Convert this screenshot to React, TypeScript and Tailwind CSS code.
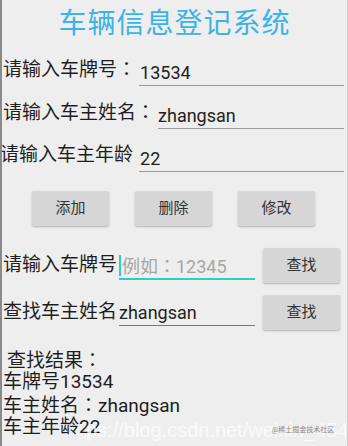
const FONT = { fontFamily: 'Roboto, "Noto Sans CJK SC", sans-serif' };

// Android-style centred full-width colon
function Colon() {
  return <span style={{ fontFamily: '"Noto Sans CJK TC", sans-serif' }}>：</span>;
}

function Field({ value, className = '' }: { value: string; className?: string }) {
  return (
    <div className={`h-[24px] border-b border-[#9a9a9a] text-[18px] leading-[22px] text-[#222] ${className}`}>
      {value}
    </div>
  );
}

function GrayButton({ label, className = '' }: { label: string; className?: string }) {
  return (
    <button className={`h-[35px] rounded-[2px] bg-[#d6d6d6] text-[15px] text-[#333] shadow-[0_1px_2px_rgba(0,0,0,0.25)] ${className}`}>
      {label}
    </button>
  );
}

export default function App() {
  return (
    <div
      className="relative w-[348px] h-[446px] overflow-hidden bg-[#eeeeee] border-l-2 border-r border-l-[#8a8a8a] border-r-[#d0d0d0] text-[#1e1e1e]"
      style={FONT}
    >
      <div className="h-[48px] flex items-center justify-center text-[28px] text-[#3db2e4] tracking-[1px]">
        车辆信息登记系统
      </div>

      <div className="h-[43px] flex items-center pr-[3px]">
        <span className="text-[19px] pl-[1px] whitespace-nowrap">请输入车牌号<Colon /></span>
        <Field value="13534" className="flex-1 ml-[3px] mt-[8px] pl-[1px]" />
      </div>

      <div className="h-[43px] flex items-center pr-[3px]">
        <span className="text-[19px] pl-[1px] whitespace-nowrap">请输入车主姓名<Colon /></span>
        <Field value="zhangsan" className="flex-1 ml-[3px] mt-[9px]" />
      </div>

      <div className="h-[43px] flex items-center pr-[3px]">
        <span className="text-[19px] -ml-[2px] whitespace-nowrap">请输入车主年龄</span>
        <Field value="22" className="flex-1 ml-[6px] mt-[9px] pl-[1px]" />
      </div>

      <div className="flex gap-[26px] pl-[30px] mt-[14px]">
        <GrayButton label="添加" className="w-[77px]" />
        <GrayButton label="删除" className="w-[77px]" />
        <GrayButton label="修改" className="w-[77px]" />
      </div>

      <div className="h-[46px] mt-[16px] flex items-center">
        <span className="text-[19px] pl-[1px] w-[117px] whitespace-nowrap">请输入车牌号</span>
        <div className="relative w-[136px] h-[26px] mt-[4px] border-b-2 border-[#2ccfc2] text-[18px] leading-[22px] text-[#a6a6a6] pl-[3px] whitespace-nowrap">
          <span className="absolute left-0 top-[1px] w-[2px] h-[21px] bg-[#2ccfc2]" />
          例如<Colon />12345
        </div>
        <GrayButton label="查找" className="w-[77px] ml-[8px]" />
      </div>

      <div className="h-[46px] mt-[1px] flex items-center">
        <span className="text-[19px] pl-[1px] w-[117px] whitespace-nowrap">查找车主姓名</span>
        <Field value="zhangsan" className="w-[136px] mt-[4px] border-[#777]" />
        <GrayButton label="查找" className="w-[77px] ml-[8px]" />
      </div>

      <div className="mt-[13px] flex flex-col text-[19px]">
        <div className="h-[22.5px] leading-[22px] pl-[5px] whitespace-nowrap">查找结果<Colon /></div>
        <div className="h-[22.5px] leading-[22px] pl-[1px] whitespace-nowrap">车牌号13534</div>
        <div className="h-[22.5px] leading-[22px] pl-[1px] whitespace-nowrap">车主姓名<Colon />zhangsan</div>
        <div className="h-[22.5px] leading-[22px] pl-[1px] whitespace-nowrap">车主年龄22</div>
      </div>

      <div className="absolute left-[84px] top-[415px] text-[20px] text-white/75 whitespace-nowrap" style={{ fontFamily: '"Liberation Sans", sans-serif' }}>
        ps://blog.csdn.net/weixin_45436477
      </div>
      <div className="absolute left-[270px] top-[425px] text-[7px] text-[#8a8a8a] whitespace-nowrap">
        @稀土掘金技术社区
      </div>
    </div>
  );
}
